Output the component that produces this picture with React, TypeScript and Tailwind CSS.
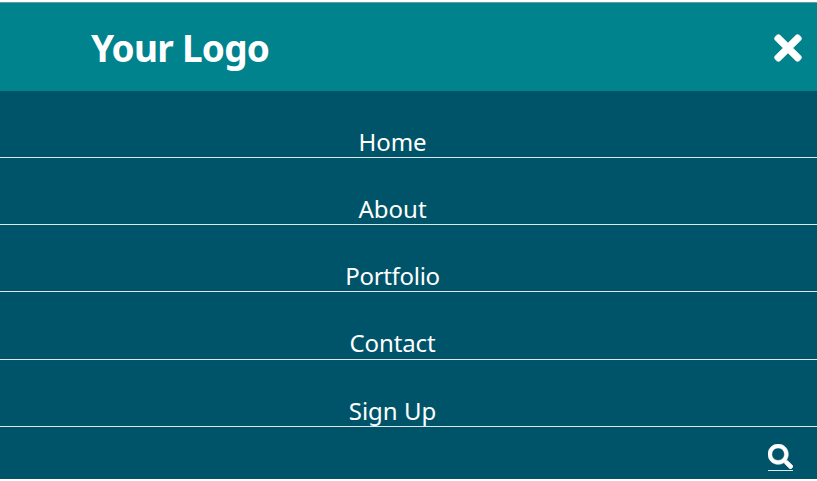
import { FaSearch, FaTimes } from "react-icons/fa";

const links = [
  { label: "Home", box: "h-[67px]", text: "tracking-[-0.1px]" },
  { label: "About", box: "h-[67px]", text: "tracking-[0px]" },
  { label: "Portfolio", box: "h-[67px]", text: "tracking-[-0.3px]" },
  { label: "Contact", box: "h-[68px] pb-px", text: "tracking-[-0.1px]" },
  { label: "Sign Up", box: "h-[67px]", text: "tracking-[0px]" },
];

export default function App() {
  return (
    <div className="flex h-[481px] w-full flex-col overflow-hidden bg-white pt-[2px] pb-[2px] font-['Noto_Sans',sans-serif] text-white">
      <header className="flex h-[89px] shrink-0 items-center justify-between border-t border-[#6a9da1] bg-[#00838c] pt-[2px] pr-[15px] pl-[91px]">
        <h1 className="text-[37px] leading-[50px] font-bold tracking-[-0.75px] whitespace-nowrap">
          Your Logo
        </h1>
        <button aria-label="Close menu">
          <FaTimes className="h-[40px] w-[28px]" />
        </button>
      </header>
      <nav className="flex grow flex-col bg-[#005469]">
        <ul>
          {links.map(({ label, box, text }) => (
            <li
              key={label}
              className={`flex ${box} items-end justify-center border-b border-[#dce8ea] pr-[32px]`}
            >
              <a href="#" className={`${text} text-[24px] leading-[30px] whitespace-nowrap`}>
                {label}
              </a>
            </li>
          ))}
        </ul>
        <div className="flex justify-end pt-[17px] pr-[24px]">
          <a href="#" aria-label="Search" className="border-b border-[#dce8ea] pb-px">
            <FaSearch className="size-[25px]" stroke="currentColor" strokeWidth="10" />
          </a>
        </div>
      </nav>
    </div>
  );
}
